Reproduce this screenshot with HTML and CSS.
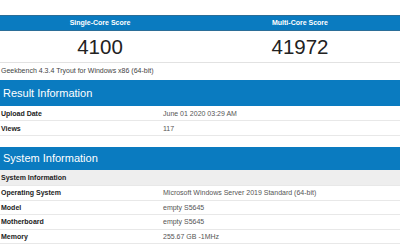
FILE: index.html
```html
<!DOCTYPE html>
<html lang="en">
<head>
  <meta charset="UTF-8" />
  <title>Geekbench Result</title>
  <link rel="stylesheet" href="styles.css">
</head>
<body>
  <div class="top-gap"></div>

  <!-- scores -->
  <div class="scores">
    <div class="score-col">
      <div class="score-head">Single-Core Score</div>
      <div class="score-num">4100</div>
    </div>
    <div class="score-col">
      <div class="score-head">Multi-Core Score</div>
      <div class="score-num">41972</div>
    </div>
  </div>
  <div class="version">Geekbench 4.3.4 Tryout for Windows x86 (64-bit)</div>

  <div class="section-head result-head">Result Information</div>
  <table class="info">
    <tr><th>Upload Date</th><td>June 01 2020 03:29 AM</td></tr>
    <tr><th>Views</th><td>117</td></tr>
  </table>

  <div class="section-head">System Information</div>
  <table class="info sys">
    <tr class="sub"><th colspan="2">System Information</th></tr>
    <tr><th>Operating System</th><td>Microsoft Windows Server 2019 Standard (64-bit)</td></tr>
    <tr><th>Model</th><td>empty S5645</td></tr>
    <tr><th>Motherboard</th><td>empty S5645</td></tr>
    <tr><th>Memory</th><td>255.67 GB -1MHz</td></tr>
  </table>
</body>
</html>
```

FILE: styles.css
```css
body {
  margin: 0;
  padding: 0;
  font-family: "Liberation Sans", Arial, sans-serif;
  background: #fff;
  color: #333;
  overflow: hidden;
}
.top-gap {
  height: 15px;
}
.scores {
  display: flex;
  border-bottom: 1px solid #e2e2e2;
}
.score-col {
  flex: 1;
  text-align: center;
}
.score-head {
  background: #0a7bc0;
  border-top: 1px solid #2b6e98;
  border-bottom: 1px solid #2b6e98;
  color: #fff;
  font-size: 7px;
  font-weight: bold;
  height: 14px;
  line-height: 14px;
}
.score-num {
  font-size: 20.5px;
  color: #222;
  height: 31px;
  line-height: 31px;
}
.version {
  font-size: 7px;
  color: #444;
  padding-left: 1px;
  height: 17px;
  line-height: 16px;
}
.section-head {
  background: #0a7bc0;
  color: #fff;
  font-size: 11px;
  height: 23px;
  line-height: 23px;
  padding-left: 3px;
}
.result-head {
  height: 26px;
  line-height: 26px;
}
.info {
  width: 100%;
  border-collapse: collapse;
  font-size: 7px;
  margin-bottom: 11px;
}
.info th,
.info td {
  text-align: left;
  height: 14px;
  padding: 0 1px;
  border-bottom: 1px solid #e8e8e8;
}
.sys th,
.sys td {
  height: 13.5px;
}
.info th {
  width: 160px;
  font-weight: bold;
  color: #222;
}
.info td {
  color: #555;
}
.info .sub th {
  background: #eee;
  height: 15px;
}
```
